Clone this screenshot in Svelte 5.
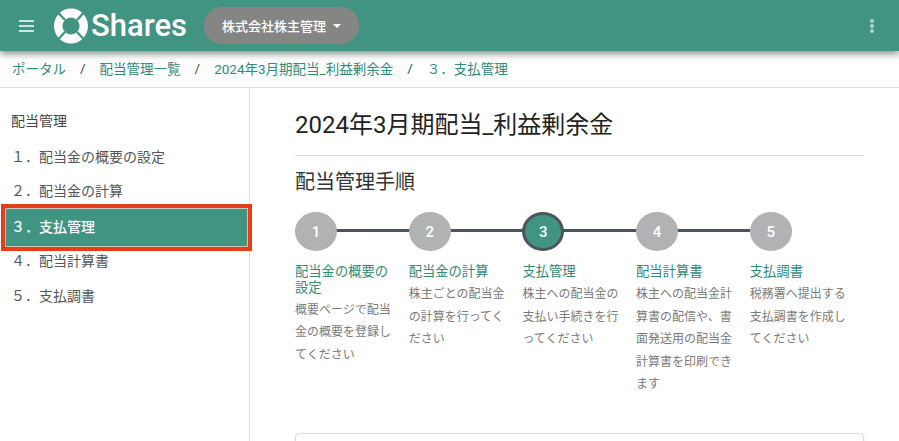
<script>
  const sideItems = [
    { no: '１．', label: '配当金の概要の設定' },
    { no: '２．', label: '配当金の計算' },
    { no: '３．', label: '支払管理', active: true },
    { no: '４．', label: '配当計算書' },
    { no: '５．', label: '支払調書' }
  ];

  const steps = [
    { title: '配当金の概要の設定', text: '概要ページで配当金の概要を登録してください' },
    { title: '配当金の計算', text: '株主ごとの配当金の計算を行ってください' },
    { title: '支払管理', text: '株主への配当金の支払い手続きを行ってください', active: true },
    { title: '配当計算書', text: '株主への配当金計算書の配信や、書面発送用の配当金計算書を印刷できます' },
    { title: '支払調書', text: '税務署へ提出する支払調書を作成してください' }
  ];

  const crumbs = ['ポータル', '配当管理一覧', '2024年3月期配当_利益剰余金', '３．支払管理'];
</script>

<div class="page">
  <header class="appbar">
    <button class="menu" aria-label="menu">
      <svg width="15" height="12" viewBox="0 0 15 12"><path d="M0 1h15M0 6h15M0 11h15" stroke="#fff" stroke-width="1.6" /></svg>
    </button>
    <div class="logo">
      <svg width="34" height="36" viewBox="0 0 34 36">
        <path fill="#fff" fill-rule="evenodd" d="M17 0.5C26.4 0.5 34 8.300 34 18S26.400 35.500 17 35.500 0 27.700 0 18 7.600 0.500 17 0.500ZM17 9.500C12.500 9.500 8.500 13.300 8.500 18S12.500 26.500 17 26.500 25.500 22.700 25.500 18 21.500 9.500 17 9.500Z" />
        <path stroke="#419382" stroke-width="2.400" d="M4.500 5 11 12M29.500 5 23 12M4.500 31 11 24M29.500 31 23 24" />
      </svg>
      <span>Shares</span>
    </div>
    <button class="company">株式会社株主管理<i class="caret"></i></button>
    <div class="spacer"></div>
    <div class="dots"><i></i><i></i><i></i></div>
  </header>

  <nav class="crumbs">
    {#each crumbs as c, i}
      {#if i > 0}<span class="sep">/</span>{/if}
      <span class="crumb">{c}</span>
    {/each}
  </nav>

  <div class="body">
    <aside class="side">
      <div class="side-title">配当管理</div>
      {#each sideItems as item}
        <div class="side-item" class:active={item.active}>{item.no}{item.label}</div>
      {/each}
    </aside>

    <main class="content">
      <h1>2024年3月期配当_利益剰余金</h1>
      <h2>配当管理手順</h2>
      <div class="steps">
        {#each steps as s, i}
          <div class="step" class:last={i === steps.length - 1}>
            <div class="track">
              <div class="circle" class:on={s.active}>{i + 1}</div>
            </div>
            <div class="step-title">{s.title}</div>
            <div class="step-text">{s.text}</div>
          </div>
        {/each}
      </div>
      <div class="card"></div>
    </main>
  </div>
</div>

<style>
  :global(body) {
    margin: 0;
    background: #fff;
  }

  .page {
    width: 899px;
    height: 441px;
    overflow: hidden;
    font-family: Roboto, "Noto Sans CJK JP", sans-serif;
    color: #333;
    display: flex;
    flex-direction: column;
  }

  .appbar {
    height: 51px;
    flex: none;
    background: #419382;
    display: flex;
    align-items: center;
    box-shadow: 0 3px 7px rgba(0, 0, 0, 0.45);
    position: relative;
    z-index: 2;
  }

  .menu {
    background: none;
    border: 0;
    padding: 0;
    margin: 0 0 0 19px;
    width: 15px;
    height: 12px;
    display: flex;
  }

  .logo {
    display: flex;
    align-items: center;
    margin-left: 20px;
    color: #fff;
    font-size: 31px;
    font-weight: 500;
  }

  .logo span {
    margin-left: 3px;
  }

  .company {
    margin-left: 17px;
    width: 155px;
    height: 37px;
    border: 0;
    border-radius: 18px;
    background: #858684;
    color: #fff;
    font-family: inherit;
    font-size: 13px;
    font-weight: 500;
    display: flex;
    align-items: center;
    justify-content: center;
  }

  .caret {
    margin-left: 7px;
    border-left: 4px solid transparent;
    border-right: 4px solid transparent;
    border-top: 4px solid #fff;
  }

  .spacer {
    flex: 1;
  }

  .dots {
    margin-right: 25px;
    display: flex;
    flex-direction: column;
    gap: 1px;
  }

  .dots i {
    width: 4px;
    height: 4px;
    border-radius: 50%;
    background: #b5d4cd;
  }

  .crumbs {
    height: 37px;
    flex: none;
    box-sizing: border-box;
    border-bottom: 1px solid #ddd;
    padding: 0 0 3px 12px;
    display: flex;
    align-items: center;
    font-size: 13.500px;
    color: #2f8a78;
  }

  .sep {
    color: #444;
    margin: 0 14px;
  }

  .body {
    flex: 1;
    display: flex;
    min-height: 0;
  }

  .side {
    width: 250px;
    flex: none;
    box-sizing: border-box;
    border-right: 1px solid #ddd;
    padding-top: 23px;
    font-size: 14px;
    color: #555;
  }

  .side-title {
    padding-left: 11px;
    height: 21px;
    line-height: 21px;
    margin-bottom: 7.500px;
    color: #444;
  }

  .side-item {
    height: 34.750px;
    line-height: 34.750px;
    padding-left: 11px;
  }

  .side-item.active {
    box-sizing: border-box;
    height: 47px;
    line-height: 37px;
    margin: -5.500px -3px -6.750px 1px;
    padding-left: 5px;
    background: #419382;
    border: 5px solid #ea3a1e;
    outline: 1px solid #c9c9b9;
    outline-offset: -5px;
    color: #fff;
    font-weight: 500;
    position: relative;
  }

  .content {
    flex: 1;
    min-width: 0;
    padding: 0 35px 0 45px;
  }

  h1 {
    margin: 0;
    padding: 21px 0 13px;
    height: 33px;
    line-height: 33px;
    font-size: 24px;
    font-weight: 400;
    color: #222;
    border-bottom: 1px solid #ddd;
  }

  h2 {
    margin: 11px 0 0;
    height: 30px;
    line-height: 30px;
    font-size: 20px;
    font-weight: 400;
    color: #333;
  }

  .steps {
    display: flex;
    margin-top: 15px;
  }

  .step {
    width: 113.700px;
    flex: none;
    box-sizing: border-box;
    padding-right: 13px;
  }

  .track {
    height: 39px;
    position: relative;
    margin-right: -13px;
    margin-bottom: 13px;
  }

  .track::after {
    content: '';
    position: absolute;
    left: 0;
    right: 0;
    top: 17px;
    height: 3px;
    background: #4a5560;
  }

  .step.last .track::after {
    display: none;
  }

  .circle {
    position: relative;
    z-index: 1;
    width: 42px;
    height: 39px;
    box-sizing: border-box;
    border-radius: 50%;
    background: #b1b2b4;
    color: #fff;
    font-size: 15px;
    font-weight: 500;
    display: flex;
    align-items: center;
    justify-content: center;
  }

  .circle.on {
    background: #419382;
    border: 3px solid #4a5560;
  }

  .step-title {
    font-size: 13.300px;
    line-height: 15.500px;
    color: #2f8a78;
  }

  .step-text {
    margin-top: 3.500px;
    font-size: 12px;
    line-height: 22.500px;
    color: #7a7a7a;
  }

  .card {
    margin-top: 37px;
    height: 60px;
    border: 1px solid #ddd;
    border-radius: 4px;
    box-shadow: 0 1px 4px rgba(0, 0, 0, 0.08);
  }
</style>
